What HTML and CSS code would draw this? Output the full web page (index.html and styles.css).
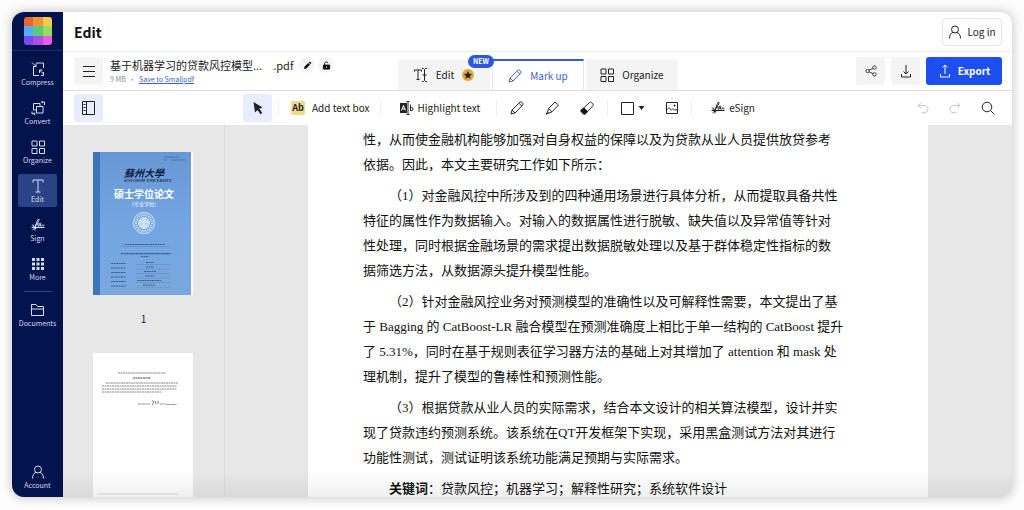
FILE: index.html
```html
<!DOCTYPE html>
<html lang="zh-CN">
<head>
<meta charset="utf-8">
<meta name="viewport" content="width=device-width, initial-scale=1">
<title>Edit</title>
<link rel="stylesheet" href="styles.css">
</head>
<body>
<svg class="defs" aria-hidden="true">
  <symbol id="i-grid" viewBox="0 0 14 14"><path d="M1 1h5v5H1zM8.500 1h5v5h-5zM1 8.500h5v5H1zM8.500 8.500h5v5h-5z"/></symbol>
  <symbol id="i-sign" viewBox="0 0 14 14"><path d="M.500 9.500h13M.8 7.500c1.200-.8 1.900-.8 1.800.2-.1.900-1 1.500-.4 1.600 1.200 0 4.300-3.700 5.600-6.600.8-2-.4-2.200-1.200-.5C5.500 4.500 4.600 8 3.800 12.500M4.400 6.800c2.200-.8 4-.9 4.900-1.500-1.500 1.200-3 3-2 3.200 1 .1 2.200-2.200 2.600-2.900-.7 1.400-.9 2.600 0 2.600.8 0 1.500-1 1.900-1.600-.2 1 .1 1.400 1.700 1.100M1.500 11.800c1.700-1.400 3.500-2.100 5.500-2.300"/></symbol>
  <symbol id="i-user" viewBox="0 0 14 14"><circle cx="7" cy="4.500" r="3.500"/><path d="M1.500 13.500c0-3.300 1.500-5.700 3.700-6.200M12.500 13.500c0-3.300-1.500-5.700-3.700-6.200"/></symbol>
  <symbol id="i-pencil" viewBox="0 0 14 14"><path d="M1 13l1-4L10 1.200c.6-.5 1.300-.4 1.900.1l.8.9c.5.600.5 1.200 0 1.800L5 12zM2 9l3 3M9 2.300l2.800 2.800"/></symbol>
</svg>
<div class="app">
  <nav class="side" aria-label="Tools">
    <a class="logo" href="#" aria-label="Smallpdf">
      <svg viewBox="0 0 28 28"><defs><clipPath id="lc"><rect width="28" height="28" rx="3"/></clipPath></defs><g clip-path="url(#lc)"><path fill="#e9652b" d="M0 0h10v10H0z"/><path fill="#f0943a" d="M9 0h10v10H9z"/><path fill="#f6cd45" d="M19 0h9v10h-9z"/><path fill="#55aef3" d="M0 9h10v10H0z"/><path fill="#58cb7c" d="M9 9h10v10H9z"/><path fill="#97dc62" d="M19 9h9v10h-9z"/><path fill="#7a48f0" d="M0 19h10v9H0z"/><path fill="#b04de4" d="M9 19h10v9H9z"/><path fill="#ea5ce8" d="M19 19h9v9h-9z"/></g></svg>
    </a>
    <a class="item" href="#"><svg class="ic" viewBox="0 0 14 14"><path d="M5 1h7.500v5M2.500 5v8.500H8M10 13.500h2.500V10M1 .500l4 4M5 1.500v3H2M12.500 12l-4-4M8.500 11V8h3"/></svg>Compress</a>
    <a class="item" href="#"><svg class="ic" viewBox="0 0 14 14"><path d="M2.500 9V2.500H9V5M5.500 5.500H12V12H5.500zM2.500 9H5M10.500 1h3v3M10.500 1l1-1M10.500 1l1 1.200M1 10.500v2.300h3M3 11.500l1.200 1.300L3 14"/></svg>Convert</a>
    <a class="item" href="#"><svg class="ic"><use href="#i-grid"/></svg>Organize</a>
    <a class="item on" href="#" aria-current="page"><svg class="ic" viewBox="0 0 14 14"><path d="M2 3.500V1h10v2.500M7 1v12M4.500 13h5"/></svg>Edit</a>
    <a class="item" href="#"><svg class="ic"><use href="#i-sign"/></svg>Sign</a>
    <a class="item" href="#"><svg class="ic solid" viewBox="0 0 14 14"><path d="M1 1h3v3H1zM5.500 1h3v3h-3zM10 1h3v3h-3zM1 5.500h3v3H1zM5.500 5.500h3v3h-3zM10 5.500h3v3h-3zM1 10h3v3H1zM5.500 10h3v3h-3zM10 10h3v3h-3z"/></svg>More</a>
    <hr class="rule">
    <a class="item" href="#"><svg class="ic" viewBox="0 0 14 14"><path d="M.500 12.500v-11H5L6.500 3.500h6v9zM.500 6h12"/></svg>Documents</a>
    <a class="item account" href="#"><svg class="ic"><use href="#i-user"/></svg>Account</a>
  </nav>
  <div class="main">
    <header class="top">
      <h1 class="title">Edit</h1>
      <button class="login"><svg class="ic"><use href="#i-user"/></svg>Log in</button>
    </header>
    <div class="filebar">
      <div class="file">
        <button class="sq" aria-label="Menu"><svg class="ic" viewBox="0 0 14 14"><path d="M1 2.500h12M1 7.500h12M1 12.500h12"/></svg></button>
        <div class="meta">
          <div class="name"><span>基于机器学习的贷款风控模型...</span><span class="ext">.pdf</span>
            <button class="round" aria-label="Rename"><svg class="tiny solid" viewBox="0 0 10 10"><path d="M1 9l.7-2.800L5.800 2.200l2 2L3.700 8.300zM6.400 1.600l.8-.7c.6-.4 1 0 1.400.4.500.500.800.900.300 1.500l-.6.800z"/></svg></button>
            <button class="round" aria-label="Protect"><svg class="tiny" viewBox="0 0 10 10"><path fill="#111" d="M1.500 4.500h7v4.500h-7z"/><path d="M3 4.500V2.500c0-2 3.500-2 3.500 0"/><path stroke="#fff" d="M5 6v1.500"/></svg></button>
          </div>
          <div class="size">9 MB&nbsp; · &nbsp;<a href="#">Save to Smallpdf</a></div>
        </div>
      </div>
      <nav class="tabs" aria-label="Mode">
        <button class="tab"><svg class="ic" viewBox="0 0 14 14"><path d="M.500 3.500V2h7v1.500M4 2v9.500M2.500 11.500h3M8 .500h1.500l1 1 1-1H13M10.500 1.500v11M8 13.500h1.500l1-1 1 1H13M8.500 7h4"/></svg>Edit<svg class="star" viewBox="0 0 12 12"><circle cx="6" cy="6" r="6" fill="#e3a63b"/><path fill="#222" d="M6 2l1.200 2.700 2.900.3-2.200 1.900.7 2.900L6 8.300 3.400 9.800l.7-2.900L1.900 5l2.900-.3z"/></svg><span class="new">NEW</span></button>
        <button class="tab on"><svg class="ic"><use href="#i-pencil"/></svg>Mark up</button>
        <button class="tab"><svg class="ic"><use href="#i-grid"/></svg>Organize</button>
      </nav>
      <div class="actions">
        <button class="sq" aria-label="Share"><svg class="ic small" viewBox="0 0 14 14"><circle cx="3" cy="7" r="2"/><circle cx="11" cy="3" r="2"/><circle cx="11" cy="11" r="2"/><path d="M4.800 6L9.200 4M4.800 8l4.400 2"/></svg></button>
        <button class="sq" aria-label="Download"><svg class="ic" viewBox="0 0 14 14"><path d="M7 1v9M4.500 7.500L7 10l2.500-2.500M2.500 10v3h9v-3"/></svg></button>
        <button class="export"><svg class="ic" viewBox="0 0 14 14"><path d="M7 10V1M4.500 3.500L7 1l2.500 2.500M2.500 10v3h9v-3"/></svg>Export</button>
      </div>
    </div>
    <div class="toolbar" role="toolbar" aria-label="Mark up">
      <button class="pick" aria-label="Thumbnails"><svg class="ic" viewBox="0 0 14 14"><path d="M.500.500h12v13H.500zM4.500.500v13M1.500 3.500h2M1.500 6.500h2M1.500 9.500h2"/></svg></button>
      <div class="tools">
        <button class="pick" aria-label="Select"><svg class="ic solid" viewBox="0 0 14 14"><path d="M2.500 1l9 5.500-3.200 1.300 3 4.200-1.800 1.300-3-4.300-2.500 2.500z"/></svg></button>
        <i class="sep"></i>
        <button class="tool box"><span class="ab">Ab</span>Add text box</button>
        <i class="sep"></i>
        <button class="tool hl"><svg class="ic" viewBox="0 0 14 14"><path fill="#222" stroke="none" d="M0 2h7v10H0z"/><path stroke="#fff" d="M1.500 9.500L3.500 4.500l2 5M2.200 8h2.600"/><path d="M6.500.500h3M8 .500v13M6.500 13.500h3M10.500 3.500v6.500M10.500 7c.8-1 2.600-.8 2.600 1s-1.800 2-2.600 1"/></svg>Highlight text</button>
        <i class="sep"></i>
        <div class="group draw">
          <button class="tool" aria-label="Pencil"><svg class="ic"><use href="#i-pencil"/></svg></button>
          <button class="tool" aria-label="Marker"><svg class="ic" viewBox="0 0 14 14"><path d="M3.500 7.500L10 1l3.500 3L7 10.800zM3.500 7.500L2.500 11l1.200 1.200L7 10.800M2.500 11L1 13.300l2.700-1.100"/></svg></button>
          <button class="tool" aria-label="Eraser"><svg class="ic" viewBox="0 0 14 14"><path d="M1.500 9l8-7.500c.6-.6 1.200-.6 1.800 0l1.500 1.500c.6.600.6 1.300 0 1.900L6 12z"/><path fill="#111" d="M4 7l3.500 3.500-1.700 2.200c-.8.800-1.900.8-2.600 0L1.300 11c-.7-.8-.6-1.700.1-2.300z"/></svg></button>
        </div>
        <i class="sep"></i>
        <div class="group shapes">
          <button class="tool" aria-label="Shape"><svg class="ic" viewBox="0 0 14 14"><path d="M.500 1.500h12v12H.500z"/></svg><svg class="caret" viewBox="0 0 6 4"><path d="M0 0h6L3 4z"/></svg></button>
          <button class="tool" aria-label="Image"><svg class="ic small" viewBox="0 0 12 12"><path d="M.500.500h11v11H.500zM1 7.500c1.500-2 2.500-2 3.500 0 .8 1.500 1.500-.8 3-.4.8.3.8 1.600 4 .4"/><circle cx="8.500" cy="3.500" r=".6" fill="#222"/></svg></button>
        </div>
        <i class="sep"></i>
        <button class="tool sign"><svg class="ic"><use href="#i-sign"/></svg>eSign</button>
      </div>
      <div class="group history">
        <button class="tool dim" aria-label="Undo"><svg class="ic small" viewBox="0 0 14 14"><path d="M4.500 1L1.500 4l3 3M1.500 4H9c5 0 5 8.500 0 8.500H5"/></svg></button>
        <button class="tool dim" aria-label="Redo"><svg class="ic small" viewBox="0 0 14 14"><path d="M9.500 1l3 3-3 3M12.500 4H5c-5 0-5 8.500 0 8.500h4"/></svg></button>
        <button class="tool" aria-label="Search"><svg class="ic" viewBox="0 0 14 14"><circle cx="6" cy="6" r="4.800"/><path d="M9.500 9.500l4 4"/></svg></button>
      </div>
    </div>
    <div class="work">
      <aside class="thumbs">
        <figure class="thumb">
          <svg class="cover" viewBox="0 0 98 143">
            <defs><linearGradient id="cg" x1="0" y1="0" x2="0" y2="1"><stop offset="0" stop-color="#6798d5"/><stop offset=".5" stop-color="#73a5e2"/><stop offset="1" stop-color="#7aa8de"/></linearGradient></defs>
            <path fill="url(#cg)" d="M0 0h98v143H0z"/><path fill="#3b76bd" d="M0 0h7v143H0z"/>
            <path stroke="#3c5f8f" stroke-width=".8" stroke-dasharray="2 .4" d="M71 5h15M71 8h3M78 8h15"/>
            <text class="brush" x="31" y="25" font-size="10">蘇州大學</text>
            <text x="31" y="30" font-size="4" font-weight="700" font-family="Liberation Serif, serif" fill="#142b52">SOOCHOW UNIVERSITY</text>
            <text x="21" y="46" font-size="10" font-weight="700" fill="#fff">硕士学位论文</text>
            <text x="36" y="54" font-size="5" fill="#fff">（专业学位）</text>
            <g fill="none" stroke="#dcecfb"><circle cx="51" cy="71" r="10.500"/><circle cx="51" cy="71" r="8" stroke-width="2" stroke-dasharray="1 1"/><circle cx="51" cy="71" r="5.500" fill="#b9d7f4"/><path d="M47 70h8M51 66v10M48 74h6"/></g>
            <g stroke="#3c5f8f" fill="none" stroke-dasharray="2 .5"><path d="M32 92.500h40M28 101.500h50M48 104.500h8M18 111.500h15M18 116h15M18 120.500h15M18 125h15M18 129.500h15M18 134h15M53 110.500h8M53 115h8M51 119.500h12M52 124h10M44 128.500h24M50 133h12"/></g>
            <path stroke="#557ba8" stroke-width=".4" d="M27 94.500h50M27 102.500h50M43 112.500h35M43 117h35M43 121.500h35M43 126h35M43 130.500h35M43 135h35"/>
          </svg>
          <figcaption>1</figcaption>
        </figure>
        <svg class="sheet" viewBox="0 0 100 150">
          <path fill="#fff" d="M0 0h100v150H0z"/>
          <g stroke="#888" fill="none" stroke-dasharray="2 .5"><path d="M25 20h48M13 30h72M9 33h75M9 36h75M9 39h60M45 51h12M67 51h6M74 51.500h10"/><path stroke="#444" d="M40 25h18"/><path stroke="#555" stroke-width=".8" stroke-dasharray="none" d="M59 48c2-1 2 2 0 4M62 48l1 3M65 48v3"/></g>
          <path stroke="#ddd" d="M4 141h82"/>
        </svg>
      </aside>
      <main class="canvas">
        <article class="page">
          <p class="cont">性，从而使金融机构能够加强对自身权益的保障以及为贷款从业人员提供放贷参考<br>依据。因此，本文主要研究工作如下所示：</p>
          <p>（1）对金融风控中所涉及到的四种通用场景进行具体分析，从而提取具备共性<br>特征的属性作为数据输入。对输入的数据属性进行脱敏、缺失值以及异常值等针对<br>性处理，同时根据金融场景的需求提出数据脱敏处理以及基于群体稳定性指标的数<br>据筛选方法，从数据源头提升模型性能。</p>
          <p>（2）针对金融风控业务对预测模型的准确性以及可解释性需要，本文提出了基<br>于 Bagging 的 CatBoost-LR 融合模型在预测准确度上相比于单一结构的 CatBoost 提升<br>了 5.31%，同时在基于规则表征学习器方法的基础上对其增加了 attention 和 mask 处<br>理机制，提升了模型的鲁棒性和预测性能。</p>
          <p>（3）根据贷款从业人员的实际需求，结合本文设计的相关算法模型，设计并实<br>现了贷款违约预测系统。该系统在QT开发框架下实现，采用黑盒测试方法对其进行<br>功能性测试，测试证明该系统功能满足预期与实际需求。</p>
          <p><b>关键词</b>：贷款风控；机器学习；解释性研究；系统软件设计</p>
        </article>
      </main>
      <div class="fade"></div>
    </div>
  </div>
</div>
</body>
</html>
```

FILE: styles.css
```css
* { box-sizing: border-box; }
body {
  margin: 0;
  height: 100vh;
  padding: 12px 12px 13px;
  background: #fdfdfd;
  color: #222;
  font: 11px/16px "Noto Sans CJK SC", sans-serif;
  overflow: hidden;
}
button { font: inherit; color: inherit; border: 0; background: none; padding: 0; margin: 0; display: flex; align-items: center; justify-content: center; }
a { color: inherit; text-decoration: none; }
.defs { display: none; }
.ic { width: 14px; height: 14px; flex: none; fill: none; stroke: currentColor; stroke-width: 1; }
.ic.solid, .tiny.solid { fill: currentColor; stroke: none; }
.ic.small { width: 12px; height: 12px; }

.app { display: flex; height: 100%; border-radius: 12px; overflow: hidden; background: #fff; box-shadow: 0 0 10px 2px rgba(0, 0, 0, .18); }

.side { width: 51px; flex: none; display: flex; flex-direction: column; align-items: center; gap: 6px; background: #03134c; color: #d5dcf5; padding-bottom: 4px; }
.logo { width: 100%; height: 39px; padding-top: 5px; display: flex; justify-content: center; border-bottom: 1px solid #202e63; }
.logo svg { width: 28px; height: 28px; }
.item { display: flex; flex-direction: column; align-items: center; height: 33px; min-width: 39px; padding-top: 5px; font-size: 7px; line-height: 12px; border-radius: 2px; }
.item.on { background: #2c4286; }
.rule { width: 28px; margin: 0; border: 0; border-top: 1px solid #34447c; }
.account { margin-top: auto; }

.main { flex: 1; min-width: 0; display: flex; flex-direction: column; }
.top { height: 40px; flex: none; display: flex; align-items: center; justify-content: space-between; padding: 0 10px 0 11px; border-bottom: 1px solid #eee; }
.title { margin: 0; font-size: 14px; line-height: 20px; font-weight: 700; color: #111; }
.login { height: 28px; width: 60px; gap: 5px; border: 1px solid #e8e8e8; border-radius: 3px; font-size: 10px; }

.filebar { height: 39px; flex: none; display: grid; grid-template-columns: 1fr auto 1fr; padding: 0 10px 0 11px; border-bottom: 1px solid #ddd; }
.file { display: flex; align-items: center; gap: 7px; }
.sq { width: 29px; height: 28px; background: #f4f4f4; border-radius: 3px; }
.name { display: flex; align-items: center; gap: 3px; white-space: nowrap; font-size: 11px; }
.ext { margin: 0 3px 0 8px; }
.round { width: 16px; height: 16px; border-radius: 50%; background: #f5f5f5; color: #111; }
.tiny { width: 9px; height: 9px; fill: none; stroke: #111; }
.size { font-size: 7px; line-height: 12px; color: #888; }
.size a { color: #3f62c4; text-decoration: underline; }
.tabs { display: flex; align-items: flex-end; gap: 2px; font-size: 10px; }
.tab { position: relative; width: 92px; height: 31px; gap: 8px; background: #f4f4f4; border-radius: 4px 4px 0 0; }
.tab.on { background: #fff; color: #4562c6; border: 1px solid #e6e6e6; border-top: 2px solid #3159d8; border-bottom: 0; border-radius: 0; }
.star { width: 12px; height: 12px; }
.new { position: absolute; z-index: 1; top: -4px; right: -4px; padding: 0 5px; border-radius: 7px; background: #2b58df; color: #fff; font-size: 7px; line-height: 13px; font-weight: 700; }
.actions { display: flex; align-items: center; justify-content: flex-end; gap: 6px; }
.export { width: 76px; height: 28px; gap: 6px; border-radius: 3px; background: #1d4ff0; color: #fff; font-size: 10px; font-weight: 700; }

.toolbar { height: 34px; flex: none; display: flex; align-items: center; padding: 0 10px 0 11px; font-size: 10px; }
.pick { width: 29px; height: 28px; border-radius: 3px; background: #e8edfd; }
.tools { display: flex; align-items: center; margin-left: 140px; white-space: nowrap; }
.sep { width: 1px; height: 14px; margin: 0 6px; background: #eee; }
.box { gap: 7px; padding: 0 4px 0 6px; }
.hl { gap: 4px; padding: 0 10px 0 13px; }
.sign { gap: 4px; padding: 0 13px; }
.group { display: flex; align-items: center; }
.draw { gap: 21px; padding: 0 7px; }
.shapes { gap: 21px; padding: 0 7px; }
.shapes .tool { gap: 3px; }
.ab { width: 14px; height: 14px; border-radius: 2px; background: #f0d98b; color: #222; font-size: 9px; line-height: 14px; font-weight: 700; text-align: center; }
.caret { width: 7px; height: 4px; fill: #222; }
.history { margin-left: auto; gap: 20px; padding-right: 7px; }
.dim { color: #bbb; }

.work { position: relative; flex: 1; min-height: 0; display: flex; background: #e7e7e7; overflow: hidden; }
.thumbs { width: 162px; flex: none; padding: 27px 30px 0; border-right: 1px solid #dcdcdc; overflow: hidden; }
.thumb { margin: 0 0 26px; }
.cover { display: block; width: 100px; padding-right: 2px; background: #fff; }
.cover .brush { font-weight: 700; font-style: italic; fill: #101f42; }
.thumb figcaption { margin-top: 16px; font-size: 10px; line-height: 16px; text-align: center; }
.sheet { display: block; width: 100px; }
.canvas { flex: 1; min-width: 0; padding: 0 84px 0 83px; overflow: hidden; }
.page { min-height: 100%; padding: 2px 0 0 55px; background: #fff; color: #111; font: 13px/25px "Liberation Serif", "Noto Sans CJK SC", serif; white-space: nowrap; }
.page p { margin: 0 0 6px; text-indent: 2em; }
.page .cont { text-indent: 0; }
.fade { position: absolute; left: 0; right: 0; bottom: 0; height: 26px; background: linear-gradient(rgba(0, 0, 0, 0), rgba(0, 0, 0, .06)); pointer-events: none; }
```
